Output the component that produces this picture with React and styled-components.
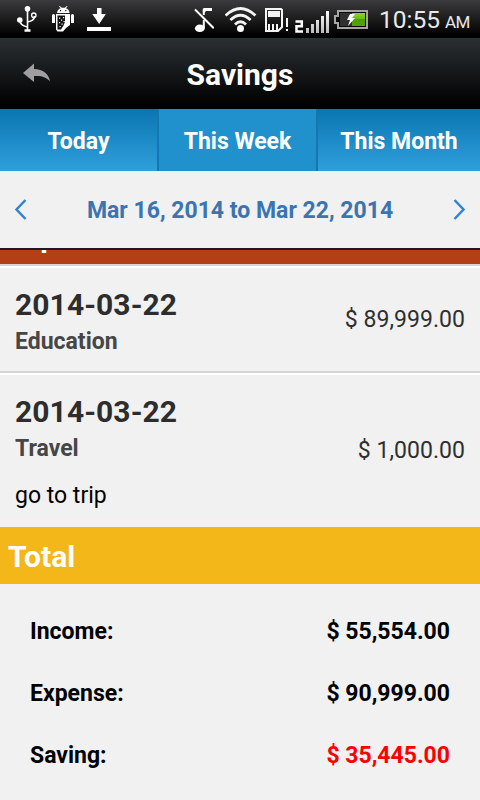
import React from "react";
import styled, { createGlobalStyle } from "styled-components";

const GlobalStyle = createGlobalStyle`
  * { box-sizing: border-box; }
  body {
    margin: 0;
    background: #f1f1f1;
    font-family: Roboto, "Liberation Sans", sans-serif;
  }
`;

const Screen = styled.div`
  display: flex;
  flex-direction: column;
  width: 480px;
  height: 800px;
  overflow: hidden;
  background: #f1f1f1;
`;

const StatusBar = styled.div`
  display: flex;
  flex: none;
  align-items: flex-start;
  height: 38px;
  background: linear-gradient(#3b3b3d, #000 95%);
`;

const StatusIcon = styled.svg`
  display: block;
  flex: none;
  width: ${(p) => p.$w}px;
  height: 38px;
  margin-left: ${(p) => p.$gap}px;
`;

const Clock = styled.div`
  margin-left: 10px;
  padding-top: 1px;
  font-size: 24.5px;
  line-height: 38px;
  white-space: nowrap;
  color: #e9e9e9;
`;

const Meridiem = styled.span`
  margin-left: 5px;
  font-size: 17px;
  letter-spacing: -0.5px;
`;

const Header = styled.header`
  display: grid;
  grid-template-columns: 74px 1fr 74px;
  flex: none;
  align-items: center;
  height: 71px;
  background: linear-gradient(#2b3033, #000 96%);
`;

const BackButton = styled.button`
  display: flex;
  padding: 0 0 0 23px;
  margin-top: -2px;
  border: 0;
  background: none;
`;

const Title = styled.h1`
  margin: 2px 0 0;
  font-size: 30px;
  line-height: 36px;
  font-weight: 700;
  text-align: center;
  color: #fff;
`;

const Tabs = styled.nav`
  display: grid;
  grid-template-columns: 159px 159px 162px;
  flex: none;
  height: 62px;
`;

const Tab = styled.button`
  padding: 4px 0 0;
  border: 0;
  border-right: ${(p) => (p.$last ? 0 : 2)}px solid #1478ae;
  background: ${(p) => (p.$active ? "#2191cd" : "linear-gradient(#0a76b1, #2f9fdc)")};
  font: 700 23px/28px Roboto, sans-serif;
  color: #fff;
`;

const DateBar = styled.div`
  display: flex;
  flex: none;
  align-items: center;
  justify-content: space-between;
  height: 79px;
  padding: 0 14px;
  border-bottom: 2px solid #25142b;
`;

const DateRange = styled.div`
  padding-top: 3px;
  font-size: 23px;
  line-height: 28px;
  font-weight: 700;
  color: #3b74b0;
  white-space: nowrap;
`;

const Chevron = styled.svg`
  display: block;
  width: 13px;
  height: 22px;
`;

const Records = styled.div`
  display: flex;
  flex: none;
  flex-direction: column;
  justify-content: flex-end;
  height: 277px;
  overflow: hidden;
`;

const SectionBar = styled.h2`
  flex: none;
  height: 57px;
  margin: 0;
  padding: 1px 8px 0;
  font-size: 30px;
  line-height: 57px;
  font-weight: 700;
  color: #fff;
  background: ${(p) => p.$color};
`;

const Record = styled.article`
  display: flex;
  flex: none;
  justify-content: space-between;
  align-items: center;
  height: ${(p) => p.$height}px;
  padding: 0 15px;
  border-top: 2px solid #d4d4d4;
  box-shadow: inset 0 2px #fff;
`;

const Details = styled.div`
  align-self: flex-start;
  padding-top: 21px;
`;

const RecordDate = styled.div`
  font-size: 30px;
  line-height: 36px;
  font-weight: 700;
  letter-spacing: 0.08px;
  color: #2d2d2d;
`;

const Category = styled.div`
  margin-top: 4px;
  font-size: 23px;
  line-height: 30px;
  font-weight: 700;
  color: #464646;
`;

const Note = styled.div`
  margin-top: 17px;
  font-size: 23px;
  line-height: 30px;
  color: #000;
`;

const Amount = styled.div`
  padding-top: 2px;
  font-size: 23px;
  line-height: 28px;
  letter-spacing: 0.05px;
  color: #2f2f2f;
`;

const Summary = styled.div`
  padding: 17px 30px 0;
`;

const SummaryRow = styled.div`
  display: flex;
  justify-content: space-between;
  height: 62px;
  font-size: 23px;
  line-height: 62px;
  font-weight: 700;
  color: #000;
`;

const SummaryValue = styled.span`
  color: ${(p) => (p.$negative ? "#f00" : "#000")};
`;

const UsbIcon = () => (
  <StatusIcon $w={20} $gap={17} viewBox="17 0 20 38" fill="none" stroke="#fff">
    <path d="M27.5 9v21M19.8 20c0 4 3 6 7.5 7M34.5 16c0 4-3 5-7 6" strokeWidth="1.6" />
    <circle cx="27.5" cy="8.8" r="2.8" fill="#fff" stroke="none" />
    <circle cx="19.8" cy="20" r="2.8" fill="#fff" stroke="none" />
    <circle cx="33.8" cy="15.2" r="2.2" strokeWidth="1.3" />
    <path d="M24.5 30.5h6" strokeWidth="2.5" />
  </StatusIcon>
);

const AndroidIcon = () => (
  <StatusIcon $w={22} $gap={15} viewBox="52 0 22 38" fill="#fff">
    <path d="M57 13c.4-3 2-4.3 3.8-4.8L59 6.4l.7-.5 2.1 1.9h3l2.1-1.9.7.5-1.8 1.8c1.8.5 3.4 1.8 3.8 4.8z" />
    <path d="M52 15.5q0-1.5 1.5-1.5t1.5 1.5V23h-3zM71 15.5q0-1.5 1.5-1.5t1.5 1.5V23h-3z" />
    <path d="M56 14h14v11l-4 3-3 3.500H57.500L56 29.500z" />
    <path d="M57.500 15.500H65v6.500l-1.500 3.500-2.500 4h-3.500z" fill="#111" />
    <path d="M59 17.5h1.2v1.2H59zM63 17h1.2v1.2H63zM61 19.5h1.2v1.2H61zM63.500 21h1.2v1.2h-1.2zM59 22h1.2v1.2H59zM61.500 23.5h1.2v1.2h-1.2zM59.5 26h1.2v1.2h-1.2z" />
    <path d="M60 10h1.2v1.2H60zM65.2 10h1.2v1.2h-1.2z" fill="#111" />
  </StatusIcon>
);

const DownloadIcon = () => (
  <StatusIcon $w={24} $gap={13} viewBox="87 0 24 38" fill="#fff">
    <path d="M97 8h4.5v6h4.3L99.2 24 92.3 14H97zM87 27h24v4H87z" />
  </StatusIcon>
);

const MuteIcon = () => (
  <StatusIcon $w={20} $gap={83} viewBox="194 0 20 38" fill="none" stroke="#fff">
    <path d="M195 9.5L213.8 28.3" strokeWidth="2" />
    <path d="M203.8 15V10M203.8 20v8" strokeWidth="2" />
    <path d="M203.8 8h8.2v3h-6l-1.2 1.5h-2V9z" fill="#fff" stroke="none" />
    <ellipse cx="199.8" cy="28.3" rx="4.9" ry="3.7" fill="#fff" stroke="none" />
  </StatusIcon>
);

const WifiIcon = () => (
  <StatusIcon $w={32} $gap={11} viewBox="225 0 32 38" fill="none" stroke="#f4f4f4" strokeWidth="2.8">
    <path d="M225.6 15.6Q240.5 1.5 255.4 15.6M230.4 20Q240.5 10.5 250.6 20M235 24.4Q240.5 19 246 24.4" />
    <circle cx="240.5" cy="28.5" r="3.5" fill="#fff" stroke="none" />
  </StatusIcon>
);

const SimIcon = () => (
  <StatusIcon $w={24} $gap={8} viewBox="265 0 24 38" fill="none" stroke="#f4f4f4">
    <path d="M266 9H281l1 1v17l-4 4H266z" strokeWidth="2" />
    <path d="M268 11h12v6h-12z" fill="#f4f4f4" stroke="none" />
    <path d="M269 24v6M273 24v6M277 24v6" strokeWidth="2" />
    <path d="M287 18v9M287 29v2" strokeWidth="2" />
  </StatusIcon>
);

const SignalIcon = () => (
  <StatusIcon $w={34} $gap={6} viewBox="295 0 34 38">
    <defs>
      <linearGradient id="signal" x1="0" y1="0" x2="0" y2="1">
        <stop offset="0" stopColor="#fff" />
        <stop offset="1" stopColor="#bbb" />
      </linearGradient>
    </defs>
    <path d="M295.5 21.5h6.3v4.7h-5.3v5.3h6.5" fill="none" stroke="#fff" strokeWidth="2.5" />
    <path
      d="M306 28h3v5h-3zM311 24h3v9h-3zM316 20h3v13h-3zM321 16h3v17h-3zM326 11h3v22h-3z"
      fill="url(#signal)"
    />
  </StatusIcon>
);

const BatteryIcon = () => (
  <StatusIcon $w={35} $gap={5} viewBox="334 0 35 38">
    <defs>
      <linearGradient id="charge" x1="0" y1="0" x2="0" y2="1">
        <stop offset="0" stopColor="#8bd62c" />
        <stop offset=".5" stopColor="#67b915" />
        <stop offset=".5" stopColor="#4e9e00" />
        <stop offset="1" stopColor="#51a500" />
      </linearGradient>
    </defs>
    <path d="M338 11h29v17h-29v-5h-3v-7h3z" fill="#080808" stroke="#a6a6a6" strokeWidth="2" />
    <path d="M340 13h12v13h-12z" fill="#303030" />
    <path d="M352 13h13v13h-13z" fill="url(#charge)" />
    <path d="M350 14h5l-3 4h3l-7 8 2-6h-3z" fill="#fff" />
  </StatusIcon>
);

const BackArrow = () => (
  <svg width="28" height="20" viewBox="0 0 28 20">
    <path d="M0 10L11 .5V6C20 6 26 11 27 18.5c-3-4-8-6-16-5.5v6z" fill="#9f9f9f" />
  </svg>
);

const tabs = ["Today", "This Week", "This Month"];

const records = [
  { date: "2014-03-22", category: "Education", amount: "$ 89,999.00", height: 107 },
  { date: "2014-03-22", category: "Travel", amount: "$ 1,000.00", note: "go to trip", height: 156 },
];

const totals = [
  { label: "Income:", value: "$ 55,554.00" },
  { label: "Expense:", value: "$ 90,999.00" },
  { label: "Saving:", value: "$ 35,445.00", negative: true },
];

export default function App() {
  return (
    <Screen>
      <GlobalStyle />
      <StatusBar>
        <UsbIcon />
        <AndroidIcon />
        <DownloadIcon />
        <MuteIcon />
        <WifiIcon />
        <SimIcon />
        <SignalIcon />
        <BatteryIcon />
        <Clock>
          10:55<Meridiem>AM</Meridiem>
        </Clock>
      </StatusBar>
      <Header>
        <BackButton aria-label="Back">
          <BackArrow />
        </BackButton>
        <Title>Savings</Title>
      </Header>
      <Tabs>
        {tabs.map((name, i) => (
          <Tab key={name} $active={i === 1} $last={i === 2}>
            {name}
          </Tab>
        ))}
      </Tabs>
      <DateBar>
        <Chevron viewBox="0 0 13 22" fill="none" stroke="#2f85d2" strokeWidth="2.5">
          <path d="M11.5 1L2.5 10.5l9 9.5" />
        </Chevron>
        <DateRange>Mar 16, 2014 to Mar 22, 2014</DateRange>
        <Chevron viewBox="0 0 13 22" fill="none" stroke="#2f85d2" strokeWidth="2.5">
          <path d="M1.500 1L10.500 10.5l-9 9.5" />
        </Chevron>
      </DateBar>
      <Records>
        <SectionBar $color="#b43e15">Expense</SectionBar>
        {records.map((r) => (
          <Record key={r.category} $height={r.height}>
            <Details>
              <RecordDate>{r.date}</RecordDate>
              <Category>{r.category}</Category>
              {r.note && <Note>{r.note}</Note>}
            </Details>
            <Amount>{r.amount}</Amount>
          </Record>
        ))}
      </Records>
      <SectionBar $color="#f4b71a">Total</SectionBar>
      <Summary>
        {totals.map((t) => (
          <SummaryRow key={t.label}>
            <span>{t.label}</span>
            <SummaryValue $negative={t.negative}>{t.value}</SummaryValue>
          </SummaryRow>
        ))}
      </Summary>
    </Screen>
  );
}
